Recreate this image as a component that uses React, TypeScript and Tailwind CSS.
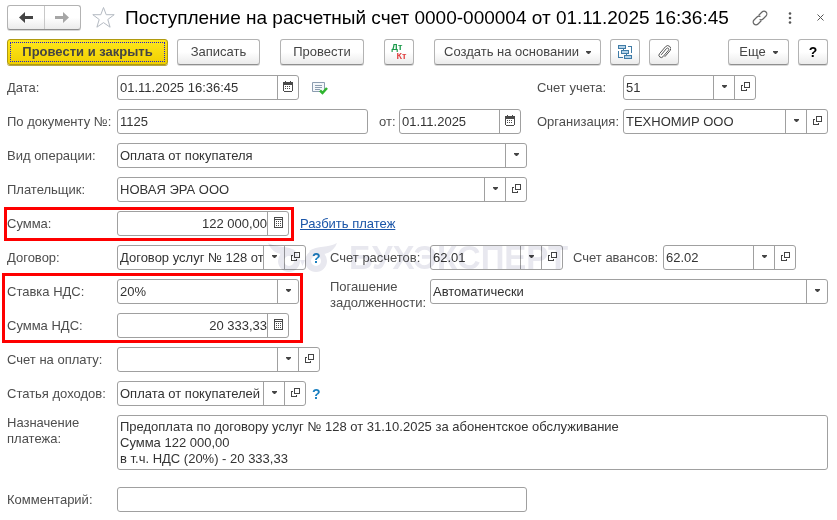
import React, { ReactNode, useState } from "react";

type FieldButton = "calendar" | "calc" | "drop" | "open";

const CalendarIcon = () => (
  <svg width="10" height="11" viewBox="0 0 10 11" fill="#4a4a4a" shapeRendering="crispEdges">
    <path d="M2 0h1v1h4V0h1v1h2v9H9v1H1v-1H0V1h2zM1 4v6h8V4z" fillRule="evenodd" />
    <path d="M2 5h1v1H2zM4 5h1v1H4zM6 5h1v1H6zM2 7h1v1H2zM4 7h1v1H4zM6 7h1v1H6z" />
  </svg>
);

const CalcIcon = () => (
  <svg width="9" height="11" viewBox="0 0 9 11" fill="#4a4a4a" shapeRendering="crispEdges">
    <path d="M0 0h9v11H0zM1 1v1h7V1zM1 3v7h7V3z" fillRule="evenodd" />
    <path d="M2 4h1v1H2zM4 4h1v1H4zM6 4h1v1H6zM2 6h1v1H2zM4 6h1v1H4zM6 6h1v1H6zM2 8h1v1H2zM4 8h1v1H4zM6 8h1v1H6z" />
  </svg>
);

const DropIcon = () => (
  <svg width="5" height="3" viewBox="0 0 5 3" fill="#444">
    <path d="M0 0h5v1L3 3H2L0 1z" />
  </svg>
);

const OpenIcon = () => (
  <svg width="9" height="9" viewBox="0 0 9 9" fill="none" stroke="#444" shapeRendering="crispEdges">
    <path d="M3.5 0.5h5v5h-5z" />
    <path d="M2 3.5H0.5v5h5V7" />
  </svg>
);

const icons: Record<FieldButton, ReactNode> = {
  calendar: <CalendarIcon />,
  calc: <CalcIcon />,
  drop: <DropIcon />,
  open: <OpenIcon />,
};

const buttonTitles: Record<FieldButton, string> = {
  calendar: "Выбрать дату",
  calc: "Калькулятор",
  drop: "Выбрать из списка",
  open: "Открыть",
};

interface FieldProps {
  id: string;
  value?: string;
  className: string;
  buttons?: FieldButton[];
  right?: boolean;
}

const Field = ({ id, value = "", className, buttons = [], right }: FieldProps) => {
  const [text, setText] = useState(value);

  return (
    <div className={`flex h-[25px] overflow-hidden rounded-[3px] border border-[#a0a0a0] bg-white ${className}`}>
      <input
        id={id}
        value={text}
        onChange={(e) => setText(e.target.value)}
        className={`min-w-0 flex-1 bg-transparent text-[#333] outline-none ${right ? "text-right" : "pl-[2px]"}`}
      />
      {buttons.map((kind) => (
        <button
          key={kind}
          type="button"
          aria-label={buttonTitles[kind]}
          className="flex w-[21px] shrink-0 items-center justify-center border-l border-[#a0a0a0] pb-[2px] hover:bg-gray-100"
        >
          {icons[kind]}
        </button>
      ))}
    </div>
  );
};

const SelectField = ({ id, options, className }: { id: string; options: string[]; className: string }) => (
  <div className={`relative h-[25px] rounded-[3px] border border-[#a0a0a0] bg-white ${className}`}>
    <select id={id} className="block h-full w-full appearance-none bg-transparent pl-[2px] pr-6 text-[#333] outline-none">
      {options.map((option) => (
        <option key={option}>{option}</option>
      ))}
    </select>
    <span className="pointer-events-none absolute inset-y-0 right-0 flex w-[21px] items-center justify-center border-l border-[#a0a0a0] pb-[2px]">
      <DropIcon />
    </span>
  </div>
);

const Label = ({ htmlFor, className = "w-[110px]", children }: { htmlFor: string; className?: string; children: ReactNode }) => (
  <label htmlFor={htmlFor} className={`shrink-0 whitespace-nowrap leading-4 ${className}`}>
    {children}
  </label>
);

const ToolButton = ({ className, label, children }: { className: string; label?: string; children: ReactNode }) => (
  <button
    type="button"
    aria-label={label}
    className={`flex h-[26px] shrink-0 items-center justify-center rounded-[3px] border border-[#b3b3b3] border-b-[#8f8f8f] bg-linear-to-b from-white from-50% to-[#ebebeb] whitespace-nowrap shadow-[0_1px_0_#d8d8d8] ${className}`}
  >
    {children}
  </button>
);

const Hint = () => (
  <button type="button" aria-label="Подсказка" className="ml-[6px] w-[18px] shrink-0 text-left text-sm leading-4 font-bold text-[#1a7fc0]">
    ?
  </button>
);

const Highlight = ({ className }: { className: string }) => (
  <div className={`pointer-events-none absolute border-[3px] border-[#fe0000] ${className}`} />
);

const Watermark = () => (
  <div className="pointer-events-none absolute -top-[2px] left-[261px] flex items-center gap-3 text-[#e8e8ef] mix-blend-multiply">
    <svg width="69" height="30" viewBox="0 0 69 30" fill="currentColor">
      <path d="M0 0c8 5 20 2 28 8l-6 4C12 12 4 10 0 0z" />
      <path d="M69 0c-8 5-20 2-28 8l6 4C57 12 65 10 69 0z" />
      <circle cx="21" cy="18" r="8" fill="none" stroke="currentColor" strokeWidth="6" />
      <circle cx="48" cy="18" r="8" fill="none" stroke="currentColor" strokeWidth="6" />
      <path d="M32 17h5l-2.500 6z" />
    </svg>
    <span className="text-[33px] leading-[30px] font-bold">БУХЭКСПЕРТ</span>
  </div>
);

const Header = () => (
  <header className="flex h-[25px] items-center">
    <div className="flex h-[25px] w-[74px] shrink-0 rounded-[3px] border border-[#b3b3b3] border-b-[#8f8f8f] bg-linear-to-b from-white from-50% to-[#ebebeb] shadow-[0_1px_0_#d8d8d8]">
      <button type="button" aria-label="Назад" className="flex flex-1 items-center justify-center border-r border-[#c8c8c8]">
        <svg width="14" height="11" viewBox="0 0 14 11" fill="#444">
          <path d="M0 5.500L6 0v4h8v3H6v4z" />
        </svg>
      </button>
      <button type="button" aria-label="Вперед" className="flex flex-1 items-center justify-center">
        <svg width="14" height="11" viewBox="0 0 14 11" fill="#a6a6a6">
          <path d="M14 5.500L8 0v4H0v3h8v4z" />
        </svg>
      </button>
    </div>
    <button type="button" aria-label="В избранное" className="ml-[10px] shrink-0">
      <svg width="25" height="23" viewBox="0 0 25 23" fill="white" stroke="#b4bac2">
        <path d="M12.5 1.5l2.700 7.200h8l-6.400 4.800 2.300 7.700-6.600-4.600-6.600 4.600 2.300-7.700L1.800 8.700h8z" />
      </svg>
    </button>
    <h1 className="ml-[9px] min-w-0 flex-1 whitespace-nowrap text-[19px] leading-6 text-black">
      Поступление на расчетный счет 0000-000004 от 01.11.2025 16:36:45
    </h1>
    <button type="button" aria-label="Ссылка" className="shrink-0">
      <svg width="16" height="16" viewBox="0 0 16 16" fill="none" stroke="#666" strokeWidth="1.200" strokeLinecap="round">
        <path d="M7 5l3-3a2.800 2.800 0 0 1 4 4l-3 3a2.800 2.800 0 0 1-3 0.600" />
        <path d="M9 11l-3 3a2.800 2.800 0 0 1-4-4l3-3a2.800 2.800 0 0 1 3-0.600" />
      </svg>
    </button>
    <button type="button" aria-label="Меню" className="ml-[20px] shrink-0">
      <svg width="4" height="12" viewBox="0 0 4 12" fill="#555">
        <circle cx="2" cy="1.500" r="1.300" />
        <circle cx="2" cy="6" r="1.300" />
        <circle cx="2" cy="10.500" r="1.300" />
      </svg>
    </button>
    <button type="button" aria-label="Закрыть" className="mr-[4px] ml-[25px] shrink-0">
      <svg width="7" height="7" viewBox="0 0 7 7" stroke="#555">
        <path d="M0.500 0.500l6 6M6.500 0.500l-6 6" />
      </svg>
    </button>
  </header>
);

const Toolbar = () => (
  <div className="mt-[9px] flex items-center text-[#444]">
    <button
      type="button"
      className="h-[26px] w-[161px] shrink-0 rounded-[3px] border border-[#b09a10] bg-linear-to-b from-[#ffe71a] to-[#f0cf00] p-[2px] shadow-[0_1px_0_#b8a540]"
    >
      <span className="flex h-full items-center justify-center border border-dotted border-[#2020d0] font-bold whitespace-nowrap">
        Провести и закрыть
      </span>
    </button>
    <ToolButton className="ml-[9px] w-[83px]">Записать</ToolButton>
    <ToolButton className="ml-[20px] w-[84px]">Провести</ToolButton>
    <ToolButton className="ml-[20px] w-[30px]" label="Дт/Кт">
      <span className="flex flex-col text-left text-[9px] leading-[9px] font-bold">
        <span className="text-[#1a9a4a]">Дт</span>
        <span className="pl-[5px] text-[#e04040]">Кт</span>
      </span>
    </ToolButton>
    <ToolButton className="ml-[20px] w-[167px] gap-[7px]">
      Создать на основании <DropIcon />
    </ToolButton>
    <ToolButton className="ml-[9px] w-[30px]" label="Структура подчиненности">
      <svg width="15" height="15" viewBox="0 0 15 15" fill="#b5d3e8" stroke="#3f7ba6" shapeRendering="crispEdges">
        <path d="M0.500 0.500h7v3h-7zM3.500 5.500h7v3h-7zM6.500 10.500h7v3h-7z" />
        <path d="M10 1.500h3.500V8M0.500 6v6.500H5M5.500 3.500v2M8.500 8.500v2" fill="none" />
      </svg>
    </ToolButton>
    <ToolButton className="ml-[9px] w-[30px]" label="Файлы">
      <svg width="13" height="14" viewBox="0 0 13 14" fill="none" stroke="#555" strokeLinecap="round">
        <path d="M3.500 9.500l5-6a1.300 1.300 0 0 1 2 1.700l-5.500 6.500a2.300 2.300 0 0 1-3.500-3l6-7a3 3 0 0 1 4.500 4L7 11.500" />
      </svg>
    </ToolButton>
    <ToolButton className="ml-auto w-[61px] gap-[7px]">
      Еще <DropIcon />
    </ToolButton>
    <ToolButton className="ml-[9px] w-[30px] text-sm font-bold text-black" label="Справка">
      ?
    </ToolButton>
  </div>
);

const PaymentForm = () => (
  <form className="mt-[10px] flex flex-col gap-[9px]">
    <div className="grid grid-cols-[minmax(0,520fr)_minmax(0,291fr)] items-center gap-x-[10px] gap-y-[9px]">
      <div className="flex items-center">
        <Label htmlFor="date">Дата:</Label>
        <Field id="date" value="01.11.2025 16:36:45" className="w-[182px]" buttons={["calendar"]} />
        <svg className="ml-[13px]" width="16" height="14" viewBox="0 0 16 14" fill="none">
          <path d="M0.500 1.500h12v9h-12z" fill="#f4f7fa" stroke="#8c9db0" />
          <path d="M3 4.500h7M3 6.500h7M3 8.500h5" stroke="#8c9db0" />
          <path d="M8 9.500l2.500 2.500L15 7" stroke="#2fb52f" strokeWidth="2.500" />
        </svg>
      </div>
      <div className="flex items-center">
        <Label htmlFor="account" className="w-[86px]">Счет учета:</Label>
        <Field id="account" value="51" className="w-[133px]" buttons={["drop", "open"]} />
      </div>

      <div className="flex items-center">
        <Label htmlFor="doc-number">По документу №:</Label>
        <Field id="doc-number" value="1125" className="min-w-0 flex-1" />
        <Label htmlFor="doc-date" className="ml-[11px] w-[20px]">от:</Label>
        <Field id="doc-date" value="01.11.2025" className="mr-[6px] w-[122px]" buttons={["calendar"]} />
      </div>
      <div className="flex items-center">
        <Label htmlFor="organization" className="w-[86px]">Организация:</Label>
        <Field id="organization" value="ТЕХНОМИР ООО" className="min-w-0 flex-1" buttons={["drop", "open"]} />
      </div>

      <div className="flex items-center">
        <Label htmlFor="operation">Вид операции:</Label>
        <SelectField id="operation" options={["Оплата от покупателя"]} className="min-w-0 flex-1" />
      </div>
      <div />

      <div className="flex items-center">
        <Label htmlFor="payer">Плательщик:</Label>
        <Field id="payer" value="НОВАЯ ЭРА ООО" className="min-w-0 flex-1" buttons={["drop", "open"]} />
      </div>
    </div>

    <div className="relative flex items-center">
      <Label htmlFor="amount">Сумма:</Label>
      <Field id="amount" value="122 000,00" className="w-[172px]" buttons={["calc"]} right />
      <a href="#split" className="ml-[11px] text-[#1a55a8] underline">Разбить платеж</a>
      <Highlight className="-top-[4px] -left-[3px] h-[34px] w-[290px]" />
    </div>

    <div className="relative flex items-center">
      <Label htmlFor="contract">Договор:</Label>
      <Field id="contract" value="Договор услуг № 128 от 31.10.2025" className="w-[189px]" buttons={["drop", "open"]} />
      <Hint />
      <Label htmlFor="settlement" className="w-[100px]">Счет расчетов:</Label>
      <Field id="settlement" value="62.01" className="w-[133px]" buttons={["drop", "open"]} />
      <Label htmlFor="advance" className="ml-[10px] w-[90px]">Счет авансов:</Label>
      <Field id="advance" value="62.02" className="w-[133px]" buttons={["drop", "open"]} />
      <Watermark />
    </div>

    <div className="flex items-start">
      <div className="relative flex w-[323px] shrink-0 flex-col gap-[9px]">
        <div className="flex items-center">
          <Label htmlFor="vat-rate">Ставка НДС:</Label>
          <SelectField id="vat-rate" options={["20%"]} className="w-[182px]" />
        </div>
        <div className="flex items-center">
          <Label htmlFor="vat-amount">Сумма НДС:</Label>
          <Field id="vat-amount" value="20 333,33" className="w-[172px]" buttons={["calc"]} right />
        </div>
        <Highlight className="-top-[6px] -left-[5px] h-[70px] w-[301px]" />
      </div>
      <Label htmlFor="debt" className="w-[100px]">
        Погашение
        <br />
        задолженности:
      </Label>
      <SelectField id="debt" options={["Автоматически"]} className="min-w-0 flex-1" />
    </div>

    <div className="flex items-center">
      <Label htmlFor="invoice">Счет на оплату:</Label>
      <Field id="invoice" className="w-[203px]" buttons={["drop", "open"]} />
    </div>

    <div className="flex items-center">
      <Label htmlFor="income">Статья доходов:</Label>
      <Field id="income" value="Оплата от покупателей" className="w-[189px]" buttons={["drop", "open"]} />
      <Hint />
    </div>

    <div className="flex items-start">
      <Label htmlFor="purpose">
        Назначение
        <br />
        платежа:
      </Label>
      <textarea
        id="purpose"
        rows={3}
        className="block min-w-0 flex-1 resize-none overflow-hidden rounded-[3px] border border-[#a0a0a0] px-[2px] pt-[3px] pb-[2px] leading-4 text-[#333] outline-none"
        defaultValue={"Предоплата по договору услуг № 128 от 31.10.2025 за абонентское обслуживание\nСумма 122 000,00\nв т.ч. НДС (20%) - 20 333,33"}
      />
    </div>

    <div className="mt-[8px] grid grid-cols-[minmax(0,520fr)_minmax(0,291fr)] gap-x-[10px]">
      <div className="flex items-center">
        <Label htmlFor="comment">Комментарий:</Label>
        <Field id="comment" className="min-w-0 flex-1" />
      </div>
    </div>
  </form>
);

export default function App() {
  return (
    <main className="bg-white pt-[5px] pr-[9px] pb-2 pl-[7px] font-['Liberation_Sans',Arial,sans-serif] text-[13px] leading-4 text-[#4d4d4d]">
      <Header />
      <Toolbar />
      <PaymentForm />
    </main>
  );
}
